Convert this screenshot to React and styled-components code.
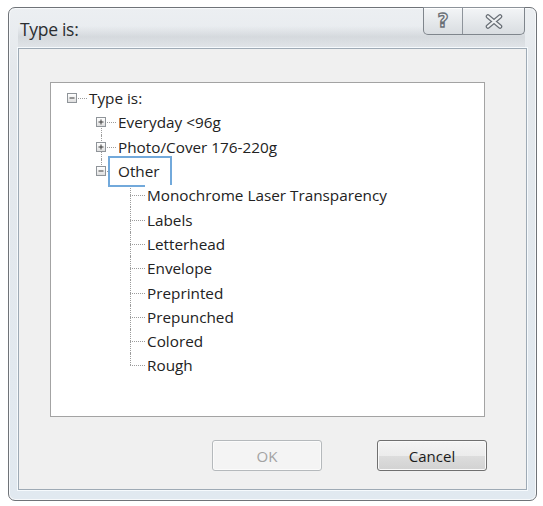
import React from 'react';
import styled, { createGlobalStyle } from 'styled-components';

const GlobalStyle = createGlobalStyle`
  html, body {
    margin: 0;
    background: #ffffff;
  }
  body {
    font-family: "Open Sans", "Liberation Sans", sans-serif;
  }
`;

const Page = styled.div`
  padding: 7px 0 0 8px;
`;

const Window = styled.div`
  box-sizing: border-box;
  width: 529px;
  height: 494px;
  border: 1px solid #6f7378;
  border-radius: 7px;
  background: linear-gradient(to bottom, #eceff2 0%, #e4e8ec 12%, #e1e9f0 100%);
  display: flex;
  flex-direction: column;
  padding: 0 9px 10px 9px;
  box-shadow: inset 0 0 0 1px #f7f9fb;
`;

const TitleBar = styled.div`
  height: 40px;
  display: flex;
  justify-content: space-between;
  align-items: center;
  padding-left: 2px;
  margin-right: 2px;
  background: linear-gradient(
    to bottom,
    rgba(255, 255, 255, 0) 0%,
    rgba(255, 255, 255, 0) 45%,
    rgba(190, 195, 200, 0.45) 72%,
    rgba(210, 214, 218, 0.3) 100%
  );
`;

const Title = styled.span`
  font-family: "Open Sans", "Liberation Sans", sans-serif;
  font-size: 17.5px;
  color: #2b2e31;
  letter-spacing: -0.3px;
  margin-top: 2px;
`;

const CaptionGroup = styled.div`
  align-self: flex-start;
  margin-top: -1px;
  display: flex;
  height: 26px;
  border: 1px solid #7f858c;
  border-top-color: #8d939a;
  border-radius: 0 0 5px 5px;
  overflow: hidden;
  background: linear-gradient(to bottom, #f3f5f7 0%, #e6e9ec 50%, #d9dde1 100%);
`;

const CaptionButton = styled.div`
  width: ${p => p.$w}px;
  display: flex;
  align-items: center;
  justify-content: center;
  border-left: ${p => (p.$divider ? '1px solid #8e949b' : 'none')};
  box-shadow: inset 0 1px 0 #ffffff;
`;

const HelpGlyph = styled.span`
  font-family: "DejaVu Sans", sans-serif;
  font-weight: bold;
  font-size: 19px;
  line-height: 1;
  color: #eef0f2;
  -webkit-text-stroke: 1.3px #6a7077;
  margin-top: -1px;
`;

const Client = styled.div`
  flex: 1;
  display: flex;
  flex-direction: column;
  background: #f0f0f0;
  border: 1px solid #9eaab5;
  padding: 33px 39px 18px 31px;
  box-shadow: 0 0 0 1px #f6fafd;
`;

const TreeBox = styled.div`
  flex: 1;
  margin-right: 2px;
  background: #ffffff;
  border: 1px solid #a3a3a3;
  padding: 3px 0 0 7px;
  font-family: "Open Sans", "Liberation Sans", sans-serif;
  font-size: 15.3px;
  color: #222222;
`;

const Row = styled.div`
  height: 24.3px;
  display: flex;
  align-items: center;
`;

const Cell = styled.span`
  position: relative;
  flex: none;
  width: 29px;
  align-self: stretch;
  display: flex;
  align-items: center;

  &::before {
    content: '';
    display: ${p => (p.$vline ? 'block' : 'none')};
    position: absolute;
    left: 14px;
    top: ${p => (p.$vline === 'bottom' ? '50%' : '0')};
    bottom: ${p => (p.$vline === 'top' ? '50%' : '0')};
    border-left: 1px dotted #9c9c9c;
  }

  &::after {
    content: '';
    display: ${p => (p.$hline ? 'block' : 'none')};
    position: absolute;
    left: 14px;
    right: 0;
    top: 50%;
    border-top: 1px dotted #9c9c9c;
  }
`;

const Expander = styled.span`
  position: relative;
  z-index: 1;
  box-sizing: border-box;
  width: 10px;
  height: 10px;
  margin-left: 9px;
  border: 1px solid #8f9499;
  background: linear-gradient(to bottom, #ffffff 0%, #f0f0f0 50%, #dedede 100%);
  display: flex;
  align-items: center;
  justify-content: center;
`;

const Label = styled.span`
  position: relative;
  z-index: 2;
  white-space: nowrap;
  padding: ${p => (p.$selected ? '0 10px 0 8px' : '0 2px')};
  margin-left: ${p => (p.$selected ? '-8px' : '0')};
  height: ${p => (p.$selected ? '27px' : 'auto')};
  line-height: ${p => (p.$selected ? '27px' : 'normal')};
  border: ${p => (p.$selected ? '2px solid #72a9db' : 'none')};
  background: #ffffff;
`;

const ButtonRow = styled.div`
  margin-top: 23px;
  display: flex;
  justify-content: flex-end;
  gap: 55px;
`;

const DialogButton = styled.button`
  width: 110px;
  height: 31px;
  border-radius: 3px;
  font-family: "Open Sans", "Liberation Sans", sans-serif;
  font-size: 15px;
  padding: 0;
  border: 1px solid ${p => (p.disabled ? '#b5b9bc' : '#707070')};
  color: ${p => (p.disabled ? '#a3a3a3' : '#1c1c1c')};
  background: ${p =>
    p.disabled
      ? '#f4f4f4'
      : 'linear-gradient(to bottom, #f4f4f4 0%, #ececec 50%, #dddddd 51%, #d2d2d2 100%)'};
  box-shadow: inset 0 0 0 1px ${p => (p.disabled ? '#fbfbfb' : '#fafafa')};
`;

const PlusMinus = ({ open }) => (
  <svg width="6" height="6" viewBox="0 0 6 6">
    <path d="M0.5 3H5.5" stroke="#3a3a3a" strokeWidth="1" />
    {!open && <path d="M3 0.5V5.5" stroke="#3a3a3a" strokeWidth="1" />}
  </svg>
);

const CloseGlyph = () => (
  <svg width="18" height="15" viewBox="0 0 18 15">
    <path d="M3 2.5L15 12.5M15 2.5L3 12.5" stroke="#6a7077" strokeWidth="4.6" strokeLinecap="round" />
    <path d="M3 2.5L15 12.5M15 2.5L3 12.5" stroke="#eef0f2" strokeWidth="2.2" strokeLinecap="round" />
  </svg>
);

const children = [
  'Monochrome Laser Transparency',
  'Labels',
  'Letterhead',
  'Envelope',
  'Preprinted',
  'Prepunched',
  'Colored',
  'Rough',
];

const groups = [
  { name: 'Everyday <96g', vline: 'bottom' },
  { name: 'Photo/Cover 176-220g', vline: 'full' },
  { name: 'Other', vline: 'top', open: true, selected: true },
];

export default function App() {
  return (
    <>
      <GlobalStyle />
      <Page>
        <Window>
          <TitleBar>
            <Title>Type is:</Title>
            <CaptionGroup>
              <CaptionButton $w={38}>
                <HelpGlyph>?</HelpGlyph>
              </CaptionButton>
              <CaptionButton $w={61} $divider>
                <CloseGlyph />
              </CaptionButton>
            </CaptionGroup>
          </TitleBar>
          <Client>
            <TreeBox>
              <Row>
                <Cell $hline>
                  <Expander>
                    <PlusMinus open />
                  </Expander>
                </Cell>
                <Label>Type is:</Label>
              </Row>
              {groups.map(g => (
                <Row key={g.name}>
                  <Cell />
                  <Cell $vline={g.vline} $hline>
                    <Expander>
                      <PlusMinus open={g.open} />
                    </Expander>
                  </Cell>
                  <Label $selected={g.selected}>{g.name}</Label>
                </Row>
              ))}
              {children.map((c, i) => (
                <Row key={c}>
                  <Cell />
                  <Cell />
                  <Cell $vline={i === children.length - 1 ? 'top' : 'full'} $hline />
                  <Label>{c}</Label>
                </Row>
              ))}
            </TreeBox>
            <ButtonRow>
              <DialogButton disabled>OK</DialogButton>
              <DialogButton>Cancel</DialogButton>
            </ButtonRow>
          </Client>
        </Window>
      </Page>
    </>
  );
}
